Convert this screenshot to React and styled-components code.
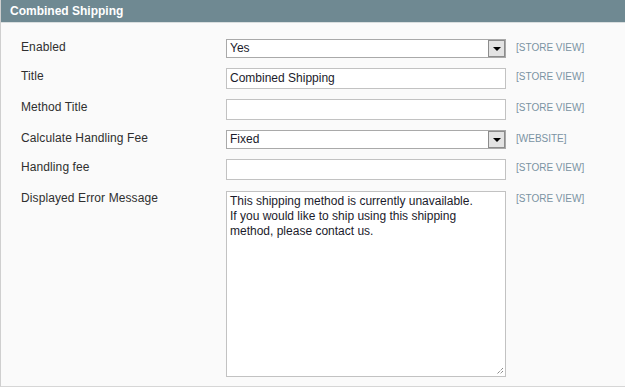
import React from "react";
import styled, { createGlobalStyle } from "styled-components";

const Global = createGlobalStyle`
  body {
    margin: 0;
    background: #fafafa;
    font-family: "Liberation Sans", Arial, sans-serif;
  }
`;

const Section = styled.div`
  width: 625px;
  height: 387px;
  box-sizing: border-box;
  background: #fafafa;
  border-left: 1px solid #cfcfcf;
  border-bottom: 1px solid #d6d6d6;
  display: flex;
  flex-direction: column;
`;

const Header = styled.div`
  height: 22px;
  background: #6f8992;
  border-bottom: 1px solid #d9dedf;
  color: #fff;
  font-weight: bold;
  font-size: 12px;
  line-height: 22px;
  padding-left: 9px;
`;

const Form = styled.div`
  display: grid;
  grid-template-columns: 195px 280px auto;
  column-gap: 10px;
  row-gap: 10px;
  padding: 16px 0 0 20px;
  align-items: start;
`;

const Label = styled.div`
  font-size: 12px;
  letter-spacing: 0.1px;
  color: #2f2f2f;
  padding-top: 1px;
  line-height: 15px;
`;

const Scope = styled.div`
  font-size: 10px;
  color: #7b93a3;
  padding-top: 2px;
  line-height: 14px;
`;

const Input = styled.div`
  box-sizing: border-box;
  height: ${(p) => (p.$select ? 19 : 21)}px;
  background: #fff;
  border: 1px solid ${(p) => (p.$select ? "#a9a9a9" : "#c2c2c2")};
  font-size: 12px;
  color: #1b1b2b;
  line-height: ${(p) => (p.$select ? 17 : 19)}px;
  padding-left: 3px;
  display: flex;
  justify-content: space-between;
`;

const Arrow = styled.div`
  box-sizing: border-box;
  width: 17px;
  height: 17px;
  background: #e3e3e3;
  border: 1px solid #8c8c8c;
  display: flex;
  align-items: center;
  justify-content: center;
  &::after {
    content: "";
    border-left: 4px solid transparent;
    border-right: 4px solid transparent;
    border-top: 4px solid #000;
    margin-top: 1px;
  }
`;

const Textarea = styled.div`
  box-sizing: border-box;
  height: 186px;
  margin-top: 1px;
  background: #fff;
  border: 1px solid #c2c2c2;
  font-size: 12px;
  line-height: 15px;
  color: #1b1b2b;
  padding: 2px 3px;
  position: relative;
`;

const Grip = styled.svg`
  position: absolute;
  right: 1px;
  bottom: 1px;
`;

const Select = ({ value }) => (
  <Input $select>
    <span>{value}</span>
    <Arrow />
  </Input>
);

export default function App() {
  return (
    <>
      <Global />
      <Section>
        <Header>Combined Shipping</Header>
        <Form>
          <Label>Enabled</Label>
          <Select value="Yes" />
          <Scope>[STORE VIEW]</Scope>

          <Label>Title</Label>
          <Input>Combined Shipping</Input>
          <Scope>[STORE VIEW]</Scope>

          <Label>Method Title</Label>
          <Input />
          <Scope>[STORE VIEW]</Scope>

          <Label>Calculate Handling Fee</Label>
          <Select value="Fixed" />
          <Scope>[WEBSITE]</Scope>

          <Label>Handling fee</Label>
          <Input />
          <Scope>[STORE VIEW]</Scope>

          <Label>Displayed Error Message</Label>
          <Textarea>
            This shipping method is currently unavailable.
            <br />
            If you would like to ship using this shipping
            <br />
            method, please contact us.
            <Grip width="8" height="8" viewBox="0 0 8 8">
              <path d="M7 1 L1 7 M7 4 L4 7" stroke="#555" strokeWidth="1" strokeDasharray="1 1" />
            </Grip>
          </Textarea>
          <Scope>[STORE VIEW]</Scope>
        </Form>
      </Section>
    </>
  );
}
